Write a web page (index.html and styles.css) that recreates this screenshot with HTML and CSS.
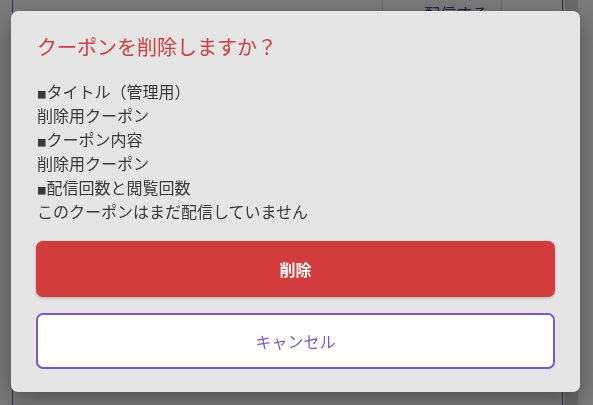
FILE: index.html
```html
<!DOCTYPE html>
<html lang="ja">
<head>
<meta charset="utf-8">
<title>クーポン削除</title>
<link rel="stylesheet" href="styles.css">
</head>
<body>
<div class="page">
  <div class="panel">
    <div class="send-btn"><span class="play">▶</span><span class="send-label">配信する</span></div>
  </div>
  <div class="strip"></div>
</div>
<div class="overlay">
  <div class="modal">
    <h2 class="modal-title">クーポンを削除しますか？</h2>
    <div class="modal-body">
      <p><span class="sq">■</span>タイトル（管理用）</p>
      <p>削除用クーポン</p>
      <p><span class="sq">■</span>クーポン内容</p>
      <p>削除用クーポン</p>
      <p><span class="sq">■</span>配信回数と閲覧回数</p>
      <p>このクーポンはまだ配信していません</p>
    </div>
    <button class="btn btn-delete">削除</button>
    <button class="btn btn-cancel">キャンセル</button>
  </div>
</div>
</body>
</html>
```
FILE: styles.css
```css
* { box-sizing: border-box; }
html, body {
  margin: 0;
  padding: 0;
  width: 593px;
  height: 405px;
  overflow: hidden;
  background: #ffffff;
  font-family: "Noto Sans CJK JP", "Noto Sans", sans-serif;
}
.page {
  display: flex;
  height: 405px;
}
.panel {
  margin-left: 12px;
  width: 551px;
  height: 405px;
  border-left: 1px solid #7e57c2;
  border-right: 1px solid #7e57c2;
}
.send-btn {
  margin-left: 369px;
  width: 120px;
  height: 40px;
  border-left: 1px solid #dcdcdc;
  border-right: 1px solid #dcdcdc;
  display: flex;
  align-items: flex-start;
  padding-top: 3px;
  padding-left: 10px;
  color: #5b3fa0;
  font-size: 16px;
  line-height: 20px;
}
.play {
  font-size: 9px;
  margin-right: 22px;
  padding-top: 6px;
}
.strip {
  margin-left: 2px;
  width: 13px;
  height: 405px;
  background: #dedede;
}
.overlay {
  position: fixed;
  inset: 0;
  background: rgba(0, 0, 0, 0.52);
  padding: 11px 0 0 11px;
}
.modal {
  width: 569px;
  height: 381px;
  background: #e5e5e5;
  border-radius: 7px;
  box-shadow: 0 8px 24px rgba(0, 0, 0, 0.35);
  padding: 24px 25px 23px 25px;
  display: flex;
  flex-direction: column;
}
.modal-title {
  margin: 0 0 20px 1px;
  font-size: 20px;
  line-height: 24px;
  font-weight: 400;
  color: #d33c3c;
}
.modal-body {
  margin-bottom: 18px;
}
.modal-body p {
  margin: 0 0 0 1px;
  font-size: 16px;
  line-height: 24px;
  color: #3a3a3a;
}
.sq {
  font-size: 9.5px;
  line-height: 1;
}
.btn {
  width: 519px;
  height: 56px;
  border-radius: 7px;
  font-family: "Noto Sans CJK JP", "Noto Sans", sans-serif;
  font-size: 16px;
  cursor: pointer;
}
.btn-delete {
  background: #d33c3c;
  color: #ffffff;
  border: none;
  font-weight: 700;
  box-shadow: 0 1px 3px rgba(0, 0, 0, 0.25);
  margin-bottom: 16px;
}
.btn-cancel {
  background: #ffffff;
  color: #7e57c2;
  border: 2px solid #7e57c2;
}
```
